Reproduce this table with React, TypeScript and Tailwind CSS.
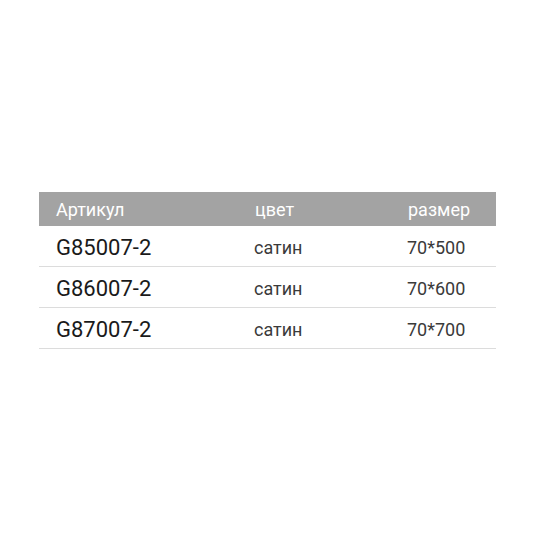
const rows = [
  { sku: "G85007-2", color: "сатин", size: "70*500" },
  { sku: "G86007-2", color: "сатин", size: "70*600" },
  { sku: "G87007-2", color: "сатин", size: "70*700" },
];

export default function App() {
  return (
    <div className="w-[534px] h-[534px] bg-white pt-[192px] pl-[39px] font-['Roboto',sans-serif]">
      <div className="w-[457px]">
        <div className="flex items-center h-[34px] bg-[#a3a3a3] text-white text-[18px]">
          <span className="w-[216px] pl-[17px]">Артикул</span>
          <span className="w-[153px]">цвет</span>
          <span>размер</span>
        </div>
        {rows.map((r) => (
          <div key={r.sku} className="flex items-center h-[41px] pt-[3px] border-b border-[#dcdcdc] text-[#1a1a1a]">
            <span className="w-[215px] pl-[17px] text-[22px]">{r.sku}</span>
            <span className="w-[153px] text-[18px] text-[#3a3a3a]">{r.color}</span>
            <span className="text-[18px] text-[#3a3a3a]">{r.size}</span>
          </div>
        ))}
      </div>
    </div>
  );
}
